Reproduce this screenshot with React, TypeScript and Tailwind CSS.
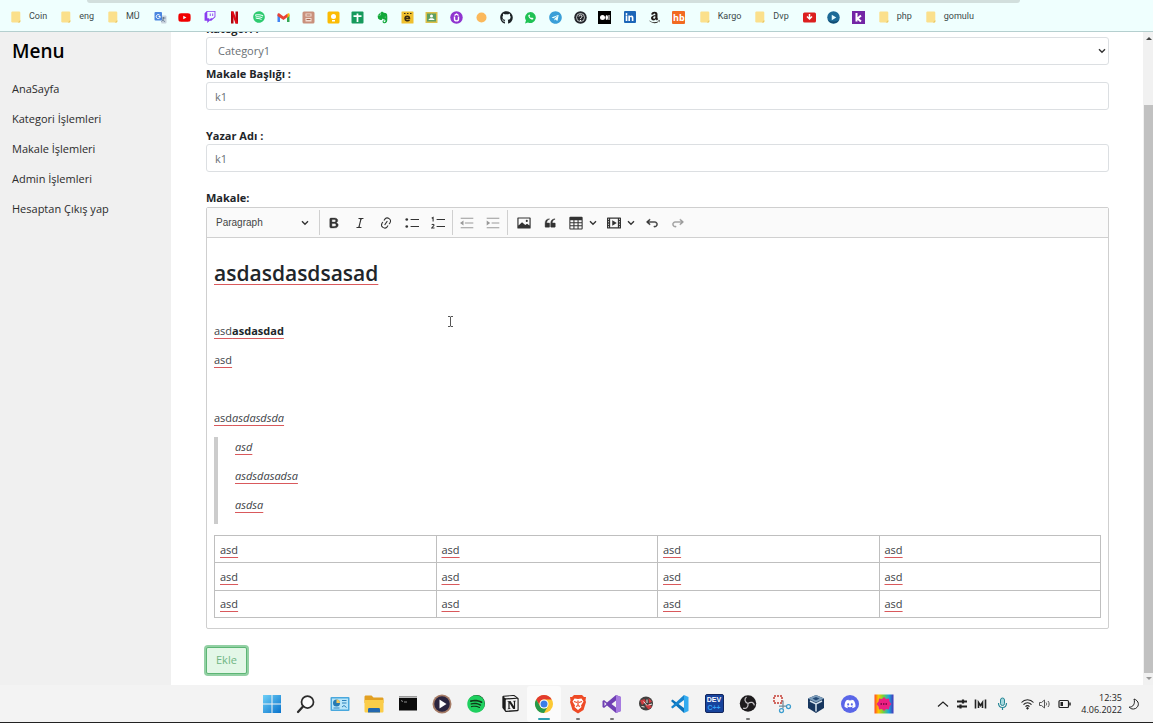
import { useState, type ReactNode } from 'react';
import { FaAmazon, FaDiscord, FaEvernote, FaGithub, FaLinkedinIn, FaSpotify, FaTelegram, FaTwitch, FaWhatsapp, FaYoutube } from 'react-icons/fa';
import { SiNotion } from 'react-icons/si';

/* ---------- bookmarks bar ---------- */

function Folder({ label }: { label: string }) {
  return (
    <a href="#" className="flex items-center gap-2 whitespace-nowrap font-['Roboto',sans-serif] text-[9px] text-[#3c4a4a]">
      <svg viewBox="0 0 10 12" className="h-3 w-[10px]" aria-hidden="true">
        <rect x="0.3" y="0.5" width="9" height="11" rx="1.2" fill="#fbe08c" />
        <path d="M9.3 9v1.5a1 1 0 0 1-1 1H6.8z" fill="#e9c765" />
      </svg>
      {label}
    </a>
  );
}

function Mark({ name, children }: { name: string; children: ReactNode }) {
  return (
    <a href="#" aria-label={name} className="flex size-[13px] items-center justify-center">
      {children}
    </a>
  );
}

function Art({ children }: { children: ReactNode }) {
  return (
    <svg viewBox="0 0 26 26" className="size-[13px]" aria-hidden="true">
      {children}
    </svg>
  );
}

function Bookmarks() {
  return (
    <header className="shrink-0 border-b border-[#b5cfcf] bg-[#effffe]">
      <div className="pl-[87px] pr-[133px]">
        <div className="h-[3px] rounded-b-[3px] bg-[#d2dfdd]" />
      </div>
      <nav aria-label="Bookmarks" className="flex h-7 items-center gap-[14px] overflow-hidden pl-[11px]">
        <Folder label="Coin" />
        <Folder label="eng" />
        <Folder label="MÜ" />
        <div className="flex w-[532px] shrink-0 items-center justify-between">
          <Mark name="Translate">
            <Art>
              <path d="M11 9h12a2 2 0 0 1 2 2v12a2 2 0 0 1-2 2H15z" fill="#c8d2dc" />
              <rect x="1" y="2" width="15" height="17" rx="2" fill="#4a86e0" />
              <path d="M11.500 8.500A4 4 0 1 0 12.500 11H9" fill="none" stroke="#fff" strokeWidth="2" />
              <path d="M15 14h8M19 12v2c0 4-2 6-4 7M17 17c1 2 3 4 5 4" fill="none" stroke="#57708a" strokeWidth="1.600" />
            </Art>
          </Mark>
          <Mark name="YouTube"><FaYoutube className="size-[13px] text-[#f00000]" /></Mark>
          <Mark name="Twitch"><FaTwitch className="size-3 text-[#8a3df0]" /></Mark>
          <Mark name="Netflix">
            <Art>
              <path d="M6 1h5v24H6zM15 1h5v24h-5z" fill="#b1060f" />
              <path d="M6 1h5l9 24h-5z" fill="#e50914" />
            </Art>
          </Mark>
          <Mark name="Spotify"><FaSpotify className="size-3 text-[#2ecb70]" /></Mark>
          <Mark name="Gmail">
            <Art>
              <path d="M1 7v15h5V11z" fill="#4285f4" />
              <path d="M25 7v15h-5V11z" fill="#34a853" />
              <path d="M20 7l2-2c2-1 3 0 3 2v3l-5 4z" fill="#fbbc04" />
              <path d="M1 7c0-3 3-3 4-2l8 6 8-6v7l-8 6-12-8z" fill="#ea4335" />
            </Art>
          </Mark>
          <Mark name="Notes">
            <Art>
              <rect x="1" y="1" width="24" height="24" rx="3" fill="#c9907c" />
              <path d="M7 5h12v6H7zM7 14h12v7H7z" fill="#f3ded4" />
              <path d="M9 8h8M9 17h8" stroke="#a8674f" strokeWidth="2" />
            </Art>
          </Mark>
          <Mark name="Keep">
            <Art>
              <rect x="1" y="1" width="24" height="24" rx="3" fill="#fbbc04" />
              <circle cx="13" cy="11" r="5" fill="#fff" />
              <path d="M10 18h6v3h-6z" fill="#fff" />
            </Art>
          </Mark>
          <Mark name="Sheets">
            <Art>
              <rect x="1" y="1" width="24" height="24" rx="2" fill="#159a5c" />
              <path d="M5 10h16M13 5v17" stroke="#fff" strokeWidth="3.500" />
            </Art>
          </Mark>
          <Mark name="Evernote"><FaEvernote className="size-[13px] text-[#12a83a]" /></Mark>
          <Mark name="Eksi">
            <Art>
              <rect x="1" y="1" width="24" height="24" rx="1" fill="#f0c02e" />
              <path d="M8 15h9c0-6-9-6-9 0 0 5 6 6 9 3" fill="none" stroke="#3a2c10" strokeWidth="3" />
              <path d="M6 5h3M12 5h3M18 5h3" stroke="#3a2c10" strokeWidth="2" />
            </Art>
          </Mark>
          <Mark name="Classroom">
            <Art>
              <rect x="1" y="2" width="24" height="22" rx="1" fill="#dcc04a" />
              <rect x="4" y="5" width="18" height="16" fill="#5f9f62" />
              <circle cx="13" cy="10" r="3" fill="#fff" />
              <path d="M7 18c0-5 12-5 12 0z" fill="#fff" />
            </Art>
          </Mark>
          <Mark name="Udemy">
            <Art>
              <circle cx="13" cy="13" r="12.500" fill="#8f35d0" />
              <path d="M9 11v5c0 5 8 5 8 0v-5M9 9l4-3 4 3" fill="none" stroke="#fff" strokeWidth="2.800" />
            </Art>
          </Mark>
          <Mark name="Dot"><Art><circle cx="13" cy="13" r="10" fill="#fbb95c" /></Art></Mark>
          <Mark name="GitHub"><FaGithub className="size-[13px] text-[#1c2326]" /></Mark>
          <Mark name="WhatsApp">
            <Art>
              <path d="M13 2a11 11 0 1 1-5 21l-6 2 2-6A11 11 0 0 1 13 2z" fill="#1fc254" />
              <path d="M9 8c-2 3 4 10 9 9l1-2-3-2-2 1-3-3 1-2-1-2z" fill="#fff" />
            </Art>
          </Mark>
          <Mark name="Telegram"><FaTelegram className="size-[13px] text-[#3a9fd8]" /></Mark>
          <Mark name="Question">
            <Art>
              <circle cx="13" cy="13" r="12.500" fill="#23262c" />
              <circle cx="13" cy="13" r="8" fill="none" stroke="#dfe4e6" strokeWidth="1.600" />
              <path d="M10 11c0-4 6-4 6 0 0 2-3 2-3 5M13 18v2" fill="none" stroke="#fff" strokeWidth="2" />
            </Art>
          </Mark>
          <Mark name="Medium">
            <Art>
              <rect width="26" height="26" fill="#000" />
              <circle cx="9" cy="13" r="5" fill="#fff" />
              <ellipse cx="17.500" cy="13" rx="2.500" ry="5" fill="#fff" />
              <path d="M22 8v10" stroke="#fff" strokeWidth="2" />
            </Art>
          </Mark>
          <Mark name="LinkedIn">
            <span className="flex size-3 items-center justify-center rounded-[1px] bg-[#1c66b8]"><FaLinkedinIn className="size-[9px] text-white" /></span>
          </Mark>
          <Mark name="Amazon"><FaAmazon className="size-[13px] text-[#1f1a17]" /></Mark>
          <Mark name="Hepsiburada">
            <span className="flex size-[13px] items-center justify-center rounded-[1px] bg-[#f26a21] font-['Open_Sans',sans-serif] text-[9px] font-bold leading-none text-white">hb</span>
          </Mark>
        </div>
        <Folder label="Kargo" />
        <Folder label="Dvp" />
        <div className="flex w-[62px] shrink-0 items-center justify-between">
          <Mark name="Downloader">
            <Art>
              <rect x="0" y="3" width="26" height="20" rx="3" fill="#dc1f1f" />
              <path d="M13 6v10M8 11l5 5 5-5" fill="none" stroke="#fff" strokeWidth="3" />
            </Art>
          </Mark>
          <Mark name="Player">
            <Art>
              <circle cx="13" cy="13" r="12.500" fill="#1d6a96" />
              <path d="M2 18a12.500 12.500 0 0 0 22 0c-6 4-15 4-22 0z" fill="#134a70" />
              <path d="M9.500 7.500l9 5.500-9 5.500z" fill="#e6fbff" />
            </Art>
          </Mark>
          <Mark name="Kick">
            <Art>
              <rect width="26" height="26" fill="#7326a5" />
              <path d="M9 4v17M18 9l-7 6 7 6" fill="none" stroke="#fff" strokeWidth="4" />
            </Art>
          </Mark>
        </div>
        <Folder label="php" />
        <Folder label="gomulu" />
      </nav>
    </header>
  );
}

/* ---------- editor ---------- */

function Chevron() {
  return (
    <svg viewBox="0 0 8 6" className="h-[6px] w-2" fill="none" stroke="#333" strokeWidth="1.400" aria-hidden="true">
      <path d="M1 1.200l3 3 3-3" />
    </svg>
  );
}

function Glyph({ children }: { children: ReactNode }) {
  return (
    <svg viewBox="0 0 20 20" className="size-[14px]" fill="currentColor" aria-hidden="true">
      {children}
    </svg>
  );
}

function Tool({ name, disabled, children }: { name: string; disabled?: boolean; children: ReactNode }) {
  return (
    <button type="button" aria-label={name} disabled={disabled} className="flex h-[26px] w-[26px] items-center justify-center text-[#333] disabled:text-[#999]">
      <Glyph>{children}</Glyph>
    </button>
  );
}

function DropTool({ name, children }: { name: string; children: ReactNode }) {
  return (
    <button type="button" aria-label={name} className="flex h-[26px] w-[38px] items-center gap-[6px] pl-[6px] text-[#333]">
      <Glyph>{children}</Glyph>
      <Chevron />
    </button>
  );
}

function Divider() {
  return <span className="mx-[1px] h-[25px] w-px bg-[#d0d0d0]" />;
}

const undoPath =
  'm5.042 9.367 2.189 1.837a.75.75 0 0 1-.965 1.149l-3.788-3.18a.747.747 0 0 1-.21-.284.75.75 0 0 1 .17-.945L6.23 4.762a.75.75 0 1 1 .964 1.15L4.863 7.866h8.917A.75.75 0 0 1 14 7.9a4 4 0 1 1-1.477 7.718l.344-1.489a2.5 2.5 0 1 0 1.094-4.73l.008-.032H5.042z';

function Toolbar() {
  return (
    <div role="toolbar" aria-label="Editor toolbar" className="flex h-[30px] items-center border-b border-[#d0d0d0] bg-[#fafafa]">
      <button type="button" className="flex h-[26px] w-[111px] items-center justify-between px-[9px] font-['Liberation_Sans',sans-serif] text-[10px] text-[#444]">
        Paragraph
        <Chevron />
      </button>
      <Divider />
      <Tool name="Bold">
        <path stroke="currentColor" strokeWidth=".6" d="M10.187 17H5.773c-.637 0-1.092-.138-1.364-.415-.273-.277-.409-.718-.409-1.323V4.738c0-.617.14-1.062.419-1.332.279-.27.73-.406 1.354-.406h4.68c.69 0 1.288.041 1.793.124.506.083.96.242 1.36.478.341.197.644.447.906.75a3.262 3.262 0 0 1 .808 2.162c0 1.401-.722 2.426-2.167 3.075C15.05 10.175 16 11.315 16 13.01a3.756 3.756 0 0 1-2.296 3.504 6.1 6.1 0 0 1-1.517.377c-.571.073-1.238.11-2 .11zm-.217-6.217H7v4.087h3.069c1.977 0 2.965-.69 2.965-2.072 0-.707-.256-1.22-.768-1.537-.512-.319-1.277-.478-2.296-.478zM7 5.13v3.619h2.606c.729 0 1.292-.067 1.69-.2a1.6 1.6 0 0 0 .91-.765c.165-.267.247-.566.247-.897 0-.707-.26-1.176-.778-1.409-.519-.232-1.31-.348-2.375-.348H7z" />
      </Tool>
      <Tool name="Italic">
        <path d="m9.586 14.633.021.004c-.036.335.095.655.393.962.082.083.173.15.274.201h1.474a.6.6 0 1 1 0 1.2H5.304a.6.6 0 0 1 0-1.2h1.15c.474-.07.809-.182 1.005-.334.157-.122.291-.32.404-.597l2.416-9.55a1.053 1.053 0 0 0-.281-.823 1.12 1.12 0 0 0-.442-.296H8.15a.6.6 0 0 1 0-1.2h6.443a.6.6 0 1 1 0 1.2h-1.195c-.376.056-.65.155-.823.296-.215.175-.423.439-.623.79l-2.366 9.347z" />
      </Tool>
      <Tool name="Link">
        <path d="m11.077 15 .991-1.416a.75.75 0 1 1 1.229.86l-1.148 1.64a.748.748 0 0 1-.217.206 5.251 5.251 0 0 1-8.503-5.955.741.741 0 0 1 .12-.274l1.147-1.639a.75.75 0 1 1 1.228.86L4.933 10.7l.006.003a3.75 3.75 0 0 0 6.132 4.294l.006.004zm5.494-5.335a.748.748 0 0 1-.12.274l-1.147 1.639a.75.75 0 1 1-1.228-.86l.86-1.23a3.75 3.75 0 0 0-6.144-4.301l-.86 1.229a.75.75 0 0 1-1.229-.86l1.148-1.64a.748.748 0 0 1 .217-.206 5.251 5.251 0 0 1 8.503 5.955zm-4.563-2.532a.75.75 0 0 1 .184 1.045l-3.155 4.505a.75.75 0 1 1-1.229-.86l3.155-4.506a.75.75 0 0 1 1.045-.184z" />
      </Tool>
      <Tool name="Bulleted List">
        <circle cx="2.500" cy="5" r="1.900" />
        <circle cx="2.500" cy="15" r="1.900" />
        <path d="M8 4.200h12v1.600H8zM8 14.200h12v1.600H8z" />
      </Tool>
      <Tool name="Numbered List">
        <path d="M8 4.200h12v1.600H8zM8 14.200h12v1.600H8z" />
        <path d="M1 3.200 3 2v6M1 12.500c3-1.500 4 .5 2.500 1.800L1 17h4" fill="none" stroke="currentColor" strokeWidth="1.500" />
      </Tool>
      <Divider />
      <Tool name="Decrease indent" disabled>
        <path d="M1 2.500h18V4H1zM7 9.200h12v1.500H7zM1 16h18v1.500H1zM5 6.500v7L0 10z" />
      </Tool>
      <Tool name="Increase indent" disabled>
        <path d="M1 2.500h18V4H1zM8 9.200h11v1.500H8zM1 16h18v1.500H1zM1 6.500v7L6 10z" />
      </Tool>
      <Divider />
      <div className="w-[2px]" />
      <Tool name="Insert image">
        <path fillRule="evenodd" d="M1.500 2h17c.600 0 1 .4 1 1v14c0 .6-.4 1-1 1h-17c-.600 0-1-.4-1-1V3c0-.6.4-1 1-1zM2.200 3.700v9.800l5-4.500 4.600 4 2.600-2 3.400 2.600V3.700zM14 5.500a1.500 1.500 0 1 1 0 3 1.500 1.500 0 0 1 0-3z" />
      </Tool>
      <Tool name="Block quote">
        <path stroke="currentColor" strokeWidth=".6" d="M3 10.423a6.5 6.5 0 0 1 6.056-6.408l.038.67C6.448 5.423 5.354 7.663 5.22 10H9c.552 0 .5.432.5.986v4.511c0 .554-.448.503-1 .503h-5c-.552 0-.5-.449-.5-1.003v-4.574zm8 0a6.5 6.5 0 0 1 6.056-6.408l.038.67c-2.646.739-3.74 2.979-3.873 5.315H17c.552 0 .5.432.5.986v4.511c0 .554-.448.503-1 .503h-5c-.552 0-.5-.449-.5-1.003v-4.574z" />
      </Tool>
      <DropTool name="Insert table">
        <path fillRule="evenodd" d="M2 1h16c1 0 1.500.5 1.500 1.500V18c0 .8-.5 1.300-1.300 1.300H1.800C1 19.300.5 18.800.5 18V2.500C.5 1.500 1 1 2 1zM2 6v3h4.300V6zm5.800 0v3h4.400V6zm5.900 0v3H18V6zM2 10.300v3h4.300v-3zm5.800 0v3h4.400v-3zm5.900 0v3H18v-3zM2 14.700v3.100h4.300v-3.100zm5.800 0v3.100h4.400v-3.100zm5.900 0v3.100H18v-3.100z" />
      </DropTool>
      <DropTool name="Insert media">
        <path fillRule="evenodd" d="M1 2h18c.6 0 1 .4 1 1v14c0 .6-.4 1-1 1H1c-.6 0-1-.4-1-1V3c0-.6.4-1 1-1zm3.500 2v12h11V4zM1.500 4v1.500h1.300V4zm0 3.500V9h1.300V7.500zm0 3.500v1.500h1.300V11zm0 3.500V16h1.300v-1.500zM17.200 4v1.500h1.300V4zm0 3.500V9h1.300V7.500zm0 3.500v1.500h1.300V11zm0 3.500V16h1.300v-1.500zM7.500 6l6.500 4-6.500 4z" />
      </DropTool>
      <Tool name="Undo"><path d={undoPath} stroke="currentColor" strokeWidth=".5" /></Tool>
      <Tool name="Redo" disabled><path d={undoPath} stroke="currentColor" strokeWidth=".5" transform="matrix(-1 0 0 1 20 0)" /></Tool>
    </div>
  );
}

function Typo({ children }: { children: ReactNode }) {
  return <span className="underline decoration-[#d9595c] decoration-1 underline-offset-[3px]">{children}</span>;
}

function Editor() {
  const rows = [0, 1, 2];
  const cols = [0, 1, 2, 3];
  return (
    <div className="rounded-[2px] border border-[#cfcfcf]">
      <Toolbar />
      <div
        role="textbox"
        aria-multiline="true"
        aria-labelledby="article-label"
        contentEditable
        suppressContentEditableWarning
        spellCheck={false}
        className="px-[7px] pb-[10px] pt-[20px] text-[11px] leading-[19px] text-[#3d4246] outline-none"
      >
        <h2 className="mb-[33px] text-[21px] font-semibold leading-[30px] text-[#212529]"><Typo>asdasdasdsasad</Typo></h2>
        <p className="mb-[10px]"><Typo>asd<strong className="text-[#212529]">asdasdad</strong></Typo></p>
        <p className="mb-[10px]"><Typo>asd</Typo></p>
        <p className="mb-[10px]"><br /></p>
        <p className="mb-[10px]"><Typo>asd<i>asdasdsda</i></Typo></p>
        <blockquote className="mb-[11px] border-l-4 border-[#ccc] pl-[17px] italic">
          <p className="pb-[10px]"><Typo>asd</Typo></p>
          <p className="pb-[10px]"><Typo>asdsdasadsa</Typo></p>
          <p className="pb-[10px]"><Typo>asdsa</Typo></p>
        </blockquote>
        <table className="h-[83px] w-full table-fixed border-collapse border border-[#b3b3b3]">
          <tbody>
            {rows.map((r) => (
              <tr key={r}>
                {cols.map((c) => (
                  <td key={c} className="border border-[#bfbfbf] px-[5px] align-middle"><Typo>asd</Typo></td>
                ))}
              </tr>
            ))}
          </tbody>
        </table>
      </div>
    </div>
  );
}

/* ---------- page ---------- */

function Field({ id, label }: { id: string; label: string }) {
  const [value, setValue] = useState('k1');
  return (
    <div className="mb-[17px]">
      <label htmlFor={id} className="block text-[11px] font-bold leading-[17px] text-[#212529]">{label}</label>
      <input id={id} value={value} onChange={(e) => setValue(e.target.value)} className="block h-7 w-full rounded-[3px] border border-[#dcdfe2] bg-white px-2 text-[11px] text-[#6a6f74] outline-none" />
    </div>
  );
}

function ArticleForm() {
  return (
    <main className="relative min-w-0 flex-1 overflow-hidden bg-white pl-[35px] pr-[34px]">
      <form className="-mt-3" onSubmit={(e) => e.preventDefault()}>
        <label htmlFor="category" className="block text-[11px] font-bold leading-[17px] text-[#212529]">Kategori :</label>
        <div className="relative">
          <select id="category" className="block h-7 w-full appearance-none rounded-[3px] border border-[#dcdfe2] bg-white px-[11px] text-[11px] text-[#6a6f74] outline-none">
            <option>Category1</option>
          </select>
          <span className="pointer-events-none absolute inset-y-0 right-[3px] flex items-center"><Chevron /></span>
        </div>
        <Field id="title" label="Makale Başlığı :" />
        <Field id="author" label="Yazar Adı :" />
        <div id="article-label" className="pb-px text-[11px] font-bold leading-[17px] text-[#212529]">Makale:</div>
        <Editor />
        <button type="submit" className="mt-[18px] h-[27px] rounded-[2px] border border-[#5cb674] bg-[#e3f7e7] px-[9px] text-[11px] text-[#6fb583] ring-2 ring-[#93d0a4]">Ekle</button>
      </form>
      <svg viewBox="0 0 7 11" className="absolute left-[276px] top-[284px] h-[11px] w-[7px]" fill="none" stroke="#555" aria-hidden="true">
        <path d="M1 .5h2l.5.500.5-.5h2M3.500 1v9M1 10.500h2l.500-.5.5.5h2" />
      </svg>
    </main>
  );
}

function Sidebar() {
  const links = ['AnaSayfa', 'Kategori İşlemleri', 'Makale İşlemleri', 'Admin İşlemleri', 'Hesaptan Çıkış yap'];
  return (
    <aside className="w-[171px] shrink-0 bg-[#f0f0f0] px-3 pt-[5px]">
      <h1 className="text-[19px] font-semibold leading-7 text-black">Menu</h1>
      <nav aria-label="Menu" className="mt-[9px] flex flex-col">
        {links.map((l) => (
          <a key={l} href="#" className="whitespace-nowrap text-[11px] leading-[30px] text-[#2b2b2b]">{l}</a>
        ))}
      </nav>
    </aside>
  );
}

function Scrollbar() {
  return (
    <div aria-hidden="true" className="flex w-[10px] shrink-0 flex-col items-center bg-[#f1f1f1]">
      <svg viewBox="0 0 10 12" className="h-3 w-[10px]"><path d="M3 8 6 5l3 3z" fill="#444" /></svg>
      <div className="mt-[61px] w-[9px] flex-1 self-end bg-[#c1c1c1]" />
      <svg viewBox="0 0 10 12" className="h-3 w-[10px]"><path d="M3 4l3 3 3-3z" fill="#999" /></svg>
    </div>
  );
}

/* ---------- taskbar ---------- */

function TaskApp({ name, state, children }: { name: string; state?: 'active' | 'open'; children: ReactNode }) {
  return (
    <button type="button" aria-label={name} className={state === 'active' ? 'relative flex h-[36px] w-[34px] items-center justify-center rounded-[3px] bg-[#fbfbfb]' : 'relative flex h-[36px] w-[34px] items-center justify-center'}>
      {children}
      {state === 'active' && <span className="absolute bottom-[2px] h-[2px] w-3 rounded-full bg-[#2a9fb0]" />}
      {state === 'open' && <span className="absolute bottom-[2px] h-[2px] w-1 rounded-full bg-[#777]" />}
    </button>
  );
}

function Big({ children }: { children: ReactNode }) {
  return <svg viewBox="0 0 40 40" className="size-5" aria-hidden="true">{children}</svg>;
}

function Taskbar() {
  return (
    <footer className="flex h-[38px] shrink-0 items-center border-b border-[#222] bg-[#f3f3f3]">
      <div className="flex-1 pl-[13px]" />
      <div className="flex pl-[3px]">
        <TaskApp name="Start">
          <Big>
            <defs><linearGradient id="win" x1="0" y1="0" x2="1" y2="1"><stop offset="0" stopColor="#6fd0f7" /><stop offset="1" stopColor="#0872cc" /></linearGradient></defs>
            <path d="M2 2h17v17H2zM21 2h17v17H21zM2 21h17v17H2zM21 21h17v17H21z" fill="url(#win)" />
          </Big>
        </TaskApp>
        <TaskApp name="Search">
          <Big><circle cx="23" cy="16" r="12" fill="#fbfbfb" stroke="#2b2b2b" strokeWidth="3.500" /><path d="M14 25 4 36" stroke="#2b2b2b" strokeWidth="4.500" strokeLinecap="round" /></Big>
        </TaskApp>
        <TaskApp name="Control Panel">
          <Big>
            <rect x="1" y="6" width="38" height="28" rx="2" fill="#49a8dd" /><rect x="4" y="9" width="32" height="22" fill="#b9e6fa" />
            <circle cx="13" cy="18" r="7" fill="#267ab2" /><path d="M13 18V11a7 7 0 0 1 7 7z" fill="#f4c95a" />
            <path d="M24 13h9M24 18h9M7 28h12M24 26l4-3 5 4" stroke="#2d82bb" strokeWidth="2" fill="none" />
          </Big>
        </TaskApp>
        <TaskApp name="File Explorer">
          <Big><path d="M1 6c0-2 1-3 3-3h11l4 4h17c2 0 3 1 3 3v8H1z" fill="#e2a022" /><path d="M1 12h38v22c0 2-1 3-3 3H4c-2 0-3-1-3-3z" fill="#fbcd49" /><path d="M8 37v-6c0-2 1-3 3-3h18c2 0 3 1 3 3v6z" fill="#2367ae" /></Big>
        </TaskApp>
        <TaskApp name="Terminal">
          <Big><rect x="2" y="5" width="36" height="28" fill="#0b0b0b" /><path d="M2 5h36v3H2z" fill="#b9b9b9" /><path d="M6 13l4 2M12 16h6" stroke="#8d8d8d" strokeWidth="2" /></Big>
        </TaskApp>
        <TaskApp name="Player">
          <Big><circle cx="20" cy="20" r="19" fill="#a57b66" /><circle cx="20" cy="20" r="15.500" fill="#2b2540" /><path d="M15 11l14 9-14 9z" fill="#fff" /></Big>
        </TaskApp>
        <TaskApp name="Spotify">
          <span className="flex size-[17px] items-center justify-center rounded-full bg-[#103818]"><FaSpotify className="size-[18px] shrink-0 text-[#1fd05f]" /></span>
        </TaskApp>
        <TaskApp name="Notion"><SiNotion className="size-[17px] text-[#1b1b1b]" /></TaskApp>
        <TaskApp name="Chrome" state="active">
          <Big>
            <circle cx="20" cy="20" r="18" fill="#fcc934" />
            <path d="M4.400 11A18 18 0 0 1 35.600 11H20a9 9 0 0 0-7.800 13.500z" fill="#e33b2e" />
            <path d="M4.400 11 12.200 24.500A9 9 0 0 0 20 29a9 9 0 0 0 7.800-4.500L20 38A18 18 0 0 1 4.400 11z" fill="#279a4a" />
            <circle cx="20" cy="20" r="9" fill="#fff" /><circle cx="20" cy="20" r="7" fill="#3a7de8" />
          </Big>
        </TaskApp>
        <TaskApp name="Brave" state="open">
          <Big>
            <path d="M12 2h16l4 4 4 0-1 7 1 3-5 16-11 7-11-7L4 16l1-3-1-7 4 0z" fill="#ee4a26" />
            <path d="M13 9l7 1 7-1 4 6-5 8 1 3-7 6-7-6 1-3-5-8z" fill="#fff" />
            <path d="M12 15l6 2M28 15l-6 2M20 13v11M16 25l4-2 4 2" stroke="#ee4a26" strokeWidth="2.500" fill="none" />
          </Big>
        </TaskApp>
        <TaskApp name="Visual Studio" state="open">
          <Big><path d="M28 2l10 4v28l-10 4L10 23l-6 5-3-2V14l3-2 6 5zM28 13l-9 7 9 7zM5 16v8l4-4z" fill="#7040b4" fillRule="evenodd" /><path d="M28 2l10 4v28l-10 4z" fill="#a77be0" /></Big>
        </TaskApp>
        <TaskApp name="Game">
          <Big><circle cx="20" cy="19" r="14" fill="#42403f" /><path d="M8 13l9-3 3 6-8 6zM25 8l7 7-6 4zM18 23l9-3 5 6-7 5z" fill="#cd3c40" /><path d="M11 25l6 1M22 11v7M25 22l7-2M15 15l7 8" stroke="#f0e6e2" strokeWidth="2" /></Big>
        </TaskApp>
        <TaskApp name="Visual Studio Code">
          <Big><path d="M5 11 2 14l26 24v-10z" fill="#0a72ba" /><path d="M5 29l-3-3L28 2v10z" fill="#1684ce" /><path d="M28 2l9 4v28l-9 4z" fill="#33abf0" /></Big>
        </TaskApp>
        <TaskApp name="Dev-C++">
          <span className="flex size-[19px] flex-col items-center justify-center rounded-[2px] border border-[#12255c] bg-[#17439c] font-['Liberation_Sans',sans-serif] text-[7px] font-bold leading-[8px]">
            <span className="text-white">DEV</span>
            <span className="text-[#32a0f5]">C++</span>
          </span>
        </TaskApp>
        <TaskApp name="OBS" state="open">
          <Big>
            <circle cx="20" cy="19" r="16.500" fill="#1d1b1d" />
            <g fill="none" stroke="#c4c1c4" strokeWidth="2.500">
              <path d="M17 6c-5 4-4 10 3 13" />
              <path d="M17 6c-5 4-4 10 3 13" transform="rotate(120 20 19)" />
              <path d="M17 6c-5 4-4 10 3 13" transform="rotate(240 20 19)" />
            </g>
          </Big>
        </TaskApp>
        <TaskApp name="Snipping Tool">
          <Big><path d="M4 4h16v14H4z" fill="#fbf1ee" stroke="#c33c35" strokeWidth="3" strokeDasharray="4 2" /><path d="M22 13v16M14 24h16" stroke="#718b9b" strokeWidth="2.500" /><circle cx="19" cy="33" r="4" fill="none" stroke="#3c9dce" strokeWidth="2.500" /><circle cx="33" cy="25" r="4" fill="none" stroke="#3c9dce" strokeWidth="2.500" /></Big>
        </TaskApp>
        <TaskApp name="VirtualBox">
          <Big><path d="M20 2l16 7v19L20 38 4 28V9z" fill="#17365e" /><path d="M20 2l16 7-16 8L4 9z" fill="#7f9fbc" /><path d="M8 14l12 6 12-6M20 20v15" stroke="#d4e1ec" strokeWidth="3" fill="none" /><path d="M13 9l7-3 7 3-7 4z" fill="#254a77" /></Big>
        </TaskApp>
        <TaskApp name="Discord">
          <span className="flex size-[18px] items-center justify-center rounded-full bg-[#5a66e8]"><FaDiscord className="size-3 text-white" /></span>
        </TaskApp>
        <TaskApp name="Rainbow">
          <Big>
            <defs><linearGradient id="rain"><stop offset="0" stopColor="#ff4a1c" /><stop offset=".2" stopColor="#ffc400" /><stop offset=".45" stopColor="#76d336" /><stop offset=".75" stopColor="#18a8de" /><stop offset="1" stopColor="#4534b8" /></linearGradient></defs>
            <rect x="1" y="1" width="38" height="38" fill="url(#rain)" />
            <path d="M20 6l4 4 6-1 1 6 4 5-4 5-1 6-6-1-4 4-4-4-6 1-1-6-4-5 4-5 1-6 6 1z" fill="#eb1f82" /><path d="M13 20h14" stroke="#8c0c50" strokeWidth="4" strokeDasharray="3 2" />
          </Big>
        </TaskApp>
      </div>
      <div className="flex flex-1 items-center justify-end pr-[13px] text-[#222]">
        <svg viewBox="0 0 140 16" className="h-4 w-[140px] shrink-0" fill="none" stroke="currentColor" role="img" aria-label="System tray">
          <path d="M7 10.500l5-4.500 5 4.500" strokeWidth="1.200" />
          <path d="M26 5.500h10M26 10.500h10" strokeWidth="1.800" /><path d="M32 3.500v4M29.500 8.500v4" strokeWidth="2.200" />
          <path d="M44.500 3.500v9M54.500 3.500v9M47.500 12V6.500l2 3 2-3V12" strokeWidth="1.600" />
          <rect x="69.500" y="2" width="4" height="7.500" rx="2" stroke="#268796" fill="#a6d8dd" /><path d="M67.500 7c0 6 8 6 8 0M71.500 11.500V14" stroke="#268796" strokeWidth="1.200" />
          <path d="M90.500 6.500c3.200-3.700 8.800-3.700 12 0M92.500 8.700c2.200-2.600 5.800-2.600 8 0M94.500 10.700c1.200-1.400 2.800-1.400 4 0" strokeWidth="1.100" /><circle cx="96.500" cy="12.300" r=".8" fill="currentColor" />
          <path d="M108.500 6.500h2l3-2.500v8l-3-2.500h-2zM115 6.500c.8 1 .8 2 0 3M117 5c1.500 2 1.500 4 0 6" stroke="#555" />
          <rect x="128" y="4.500" width="9.500" height="7" rx="1" strokeWidth="1.200" /><path d="M129.500 6h2.500v4h-2.500z" fill="currentColor" stroke="none" /><path d="M139 6.500v3" strokeWidth="1.500" />
        </svg>
        <time className="ml-[10px] whitespace-nowrap text-right text-[9px] leading-3">12:35<br />4.06.2022</time>
        <svg viewBox="0 0 12 12" className="ml-[6px] size-3 shrink-0" fill="none" stroke="currentColor" aria-label="Focus assist" role="img"><path d="M6 1c5 1.500 6 7 1.500 9.500C5 11.600 2.500 11 1.200 9 5 9.500 7.500 5.500 6 1z" /></svg>
      </div>
    </footer>
  );
}

export default function App() {
  return (
    <div className="flex h-screen flex-col overflow-hidden bg-white font-['Open_Sans','Noto_Sans',sans-serif]">
      <Bookmarks />
      <div className="flex min-h-0 flex-1">
        <Sidebar />
        <ArticleForm />
        <Scrollbar />
      </div>
      <Taskbar />
    </div>
  );
}
